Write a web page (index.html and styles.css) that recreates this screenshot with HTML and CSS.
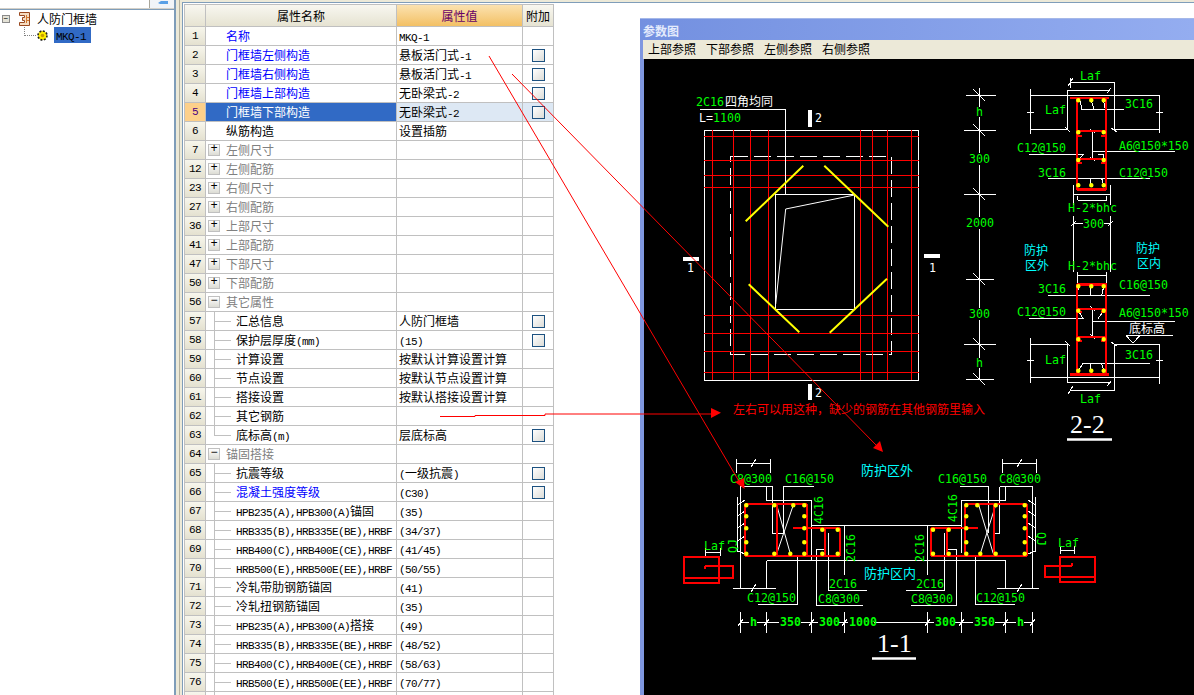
FILE: index.html
```html
<!DOCTYPE html>
<html lang="zh">
<head>
<meta charset="utf-8">
<title>人防门框墙</title>
<link rel="stylesheet" href="styles.css">
</head>
<body>
<div class="app">
  <aside class="side">
    <div class="side-top">
      <div class="side-box"></div>
      <div class="side-btn"><svg width="12" height="6" viewBox="0 0 12 6"><path class="btn-arrow" d="M1 3 4 1H11V4H3Z"/></svg></div>
    </div>
    <div class="tree">
      <div class="tree-row root">
        <span class="tree-toggle">−</span>
        <svg class="wall-icon" width="11" height="14" viewBox="0 0 11 14"><path class="wall-a" d="M.5.500H10.500V13.500H.5V10.500H5.500V8.500H3.500V5.500H5.500V3.500H.5Z"/><path class="wall-b" d="M7.500 3V11M7.500 5.500H10M7.500 8.500H10"/></svg>
        <span class="tree-label">人防门框墙</span>
      </div>
      <div class="tree-row leaf">
        <span class="tree-dots"></span>
        <svg class="gear" width="11" height="11" viewBox="0 0 11 11"><circle class="gear-a" cx="5.500" cy="5.500" r="4.500"/><circle class="gear-b" cx="5.500" cy="5.500" r="1.800"/></svg>
        <span class="tree-sel"><span class="la">MKQ-1</span></span>
      </div>
    </div>
  </aside>
  <div class="gap"></div>
  <main class="content">
    <table class="grid">
      <colgroup><col class="c1"><col class="c2"><col class="c3"><col class="c4"></colgroup>
      <thead><tr><th class="hd"></th><th class="hd">属性名称</th><th class="hd hv">属性值</th><th class="hd">附加</th></tr></thead>
      <tbody>
        <tr><td class="n">1</td><td class="name blue">名称</td><td class="val"><span class="la">MKQ-1</span></td><td></td></tr>
        <tr><td class="n">2</td><td class="name blue">门框墙左侧构造</td><td class="val">悬板活门式<span class="la">-1</span></td><td class="ck"><span class="box"></span></td></tr>
        <tr><td class="n">3</td><td class="name blue">门框墙右侧构造</td><td class="val">悬板活门式<span class="la">-1</span></td><td class="ck"><span class="box"></span></td></tr>
        <tr><td class="n">4</td><td class="name blue">门框墙上部构造</td><td class="val">无卧梁式<span class="la">-2</span></td><td class="ck"><span class="box"></span></td></tr>
        <tr><td class="n sel-n">5</td><td class="name sel-name">门框墙下部构造</td><td class="val sel-val">无卧梁式<span class="la">-2</span></td><td class="ck sel-val"><span class="box"></span></td></tr>
        <tr><td class="n">6</td><td class="name">纵筋构造</td><td class="val">设置插筋</td><td></td></tr>
        <tr><td class="n">7</td><td class="grp"><span class="exp">+</span>左侧尺寸</td><td></td><td></td></tr>
        <tr><td class="n">12</td><td class="grp"><span class="exp">+</span>左侧配筋</td><td></td><td></td></tr>
        <tr><td class="n">23</td><td class="grp"><span class="exp">+</span>右侧尺寸</td><td></td><td></td></tr>
        <tr><td class="n">27</td><td class="grp"><span class="exp">+</span>右侧配筋</td><td></td><td></td></tr>
        <tr><td class="n">36</td><td class="grp"><span class="exp">+</span>上部尺寸</td><td></td><td></td></tr>
        <tr><td class="n">41</td><td class="grp"><span class="exp">+</span>上部配筋</td><td></td><td></td></tr>
        <tr><td class="n">47</td><td class="grp"><span class="exp">+</span>下部尺寸</td><td></td><td></td></tr>
        <tr><td class="n">50</td><td class="grp"><span class="exp">+</span>下部配筋</td><td></td><td></td></tr>
        <tr><td class="n">56</td><td class="grp"><span class="exp">−</span>其它属性</td><td></td><td></td></tr>
        <tr><td class="n">57</td><td class="child">汇总信息</td><td class="val">人防门框墙</td><td class="ck"><span class="box"></span></td></tr>
        <tr><td class="n">58</td><td class="child">保护层厚度<span class="la">(mm)</span></td><td class="val"><span class="la">(15)</span></td><td class="ck"><span class="box"></span></td></tr>
        <tr><td class="n">59</td><td class="child">计算设置</td><td class="val">按默认计算设置计算</td><td></td></tr>
        <tr><td class="n">60</td><td class="child">节点设置</td><td class="val">按默认节点设置计算</td><td></td></tr>
        <tr><td class="n">61</td><td class="child">搭接设置</td><td class="val">按默认搭接设置计算</td><td></td></tr>
        <tr><td class="n">62</td><td class="child">其它钢筋</td><td class="val"></td><td></td></tr>
        <tr><td class="n">63</td><td class="child last">底标高<span class="la">(m)</span></td><td class="val">层底标高</td><td class="ck"><span class="box"></span></td></tr>
        <tr><td class="n">64</td><td class="grp"><span class="exp">−</span>锚固搭接</td><td></td><td></td></tr>
        <tr><td class="n">65</td><td class="child">抗震等级</td><td class="val"><span class="la">(</span>一级抗震<span class="la">)</span></td><td class="ck"><span class="box"></span></td></tr>
        <tr><td class="n">66</td><td class="child blue">混凝土强度等级</td><td class="val"><span class="la">(C30)</span></td><td class="ck"><span class="box"></span></td></tr>
        <tr><td class="n">67</td><td class="child"><span class="la">HPB235(A),HPB300(A)</span>锚固</td><td class="val"><span class="la">(35)</span></td><td></td></tr>
        <tr><td class="n">68</td><td class="child"><span class="la">HRB335(B),HRB335E(BE),HRBF</span></td><td class="val"><span class="la">(34/37)</span></td><td></td></tr>
        <tr><td class="n">69</td><td class="child"><span class="la">HRB400(C),HRB400E(CE),HRBF</span></td><td class="val"><span class="la">(41/45)</span></td><td></td></tr>
        <tr><td class="n">70</td><td class="child"><span class="la">HRB500(E),HRB500E(EE),HRBF</span></td><td class="val"><span class="la">(50/55)</span></td><td></td></tr>
        <tr><td class="n">71</td><td class="child">冷轧带肋钢筋锚固</td><td class="val"><span class="la">(41)</span></td><td></td></tr>
        <tr><td class="n">72</td><td class="child">冷轧扭钢筋锚固</td><td class="val"><span class="la">(35)</span></td><td></td></tr>
        <tr><td class="n">73</td><td class="child"><span class="la">HPB235(A),HPB300(A)</span>搭接</td><td class="val"><span class="la">(49)</span></td><td></td></tr>
        <tr><td class="n">74</td><td class="child"><span class="la">HRB335(B),HRB335E(BE),HRBF</span></td><td class="val"><span class="la">(48/52)</span></td><td></td></tr>
        <tr><td class="n">75</td><td class="child"><span class="la">HRB400(C),HRB400E(CE),HRBF</span></td><td class="val"><span class="la">(58/63)</span></td><td></td></tr>
        <tr><td class="n">76</td><td class="child"><span class="la">HRB500(E),HRB500E(EE),HRBF</span></td><td class="val"><span class="la">(70/77)</span></td><td></td></tr>
        <tr><td class="n"></td><td class="child"></td><td></td><td></td></tr>
      </tbody>
    </table>
  </main>
</div>

<section class="win">
  <header class="win-title">参数图</header>
  <nav class="win-menu"><span>上部参照</span><span>下部参照</span><span>左侧参照</span><span>右侧参照</span></nav>
  <svg class="cad" width="550" height="636" viewBox="644 59 550 636">
    <!-- plan -->
    <rect class="w" x="704.500" y="130.500" width="214" height="250"/>
    <path class="w dash" d="M730.500 156.500H891.500V354.500H730.500Z"/>
    <path class="r1" d="M712.500 130V380M733.500 130V380M750.500 130V380M768.500 130V380M860.500 130V380M872.500 130V380M887.500 130V380M911.500 130V380M704 136.500H919M704 160.500H919M704 175.500H919M704 187.500H919M704 315.500H919M704 333.500H919M704 351.500H919M704 372.500H919"/>
    <rect class="w" x="775.500" y="194.500" width="79" height="115"/>
    <path class="wa" d="M854.500 195 785.700 209 775.700 304"/>
    <path class="w" d="M700 109.500H785.500V194"/>
    <path class="ye" d="M803.300 165.700 745.700 221.300M824.300 165.700 888.300 226.700M748.700 284.300 799.300 332.300M887 278.700 829.700 332.700"/>
    <path class="bar" d="M810 110V127M810 384V400M683 259H699M924 256H940"/>
    <text class="t wt" x="815" y="122">2</text><text class="t wt" x="815" y="397">2</text>
    <text class="t wt" x="687" y="272">1</text><text class="t wt" x="929" y="272">1</text>
    <text class="t gt" x="696" y="106">2C16</text><text class="cj wt" x="725" y="106">四角均同</text>
    <text class="t wt" x="699" y="122">L=</text><text class="t gt" x="713" y="122">1100</text>

    <!-- height dimensions -->
    <path class="w" d="M979.500 88V107M979.500 117V153M979.500 165V217M979.500 229V308M979.500 320V358M979.500 368V380M966 95.500H996M964 130.500H996M964 194.500H996M966 279.500H994M964 344.500H996M966 379.500H994M973 89 985 101M973 124 985 136M973 188 985 200M973 273 985 285M973 338 985 350M973 373 985 385"/>
    <text class="t gt" x="976" y="116">h</text><text class="t gt" x="969" y="163">300</text><text class="t gt" x="966" y="227">2000</text>
    <text class="t gt" x="969" y="318">300</text><text class="t gt" x="976" y="367">h</text>

    <!-- section 2-2 upper -->
    <path class="w" d="M1030.500 89V134M1159.500 95V133M1030.500 95.500H1159.500M1030.500 129.500H1067.500V90H1110M1114.500 129.500H1159.500M1114.500 129.500V82.500H1070.500M1070.500 78V88M1027 112H1034M1156 112H1163M1065 127 1070 132M1111 128 1117 132M1068 86 1073 78M1107 93 1111 88"/>
    <path class="w" d="M1124 109.500H1082L1080 101M1094 109.500 1091.500 101M1105.500 109.500 1103.500 101M1029 154.500H1083L1078.500 160M1092.500 131.700V160M1092.500 151.500H1175M1090 129 1095 133M1090 157 1095 161M1098 154.500H1103.700V160M1048 178.500H1150M1077.500 178.500 1078.300 185M1090 178.500 1091.300 185M1101.700 178.500 1103.700 185M1073.500 194.500H1110.500M1073.500 185V205M1110.500 185V205M1077.500 200.500H1106.500M1077.500 196V200M1106.500 196V200M1073.500 216V272M1110.500 216V272M1073.500 223.500H1083M1103.500 223.500H1110.500M1071 226 1076 221M1108 226 1113 221"/>
    <path class="r2" d="M1070 97.700H1108.700M1077 98V190M1105.700 98V190M1077 130.700H1105.700M1077 158.700H1105.700M1077 135.500H1082M1101 135.500H1105.700M1077 163H1082M1101 163H1105.700"/>
    <path class="r3" d="M1077 189.300H1106"/>
    <path class="dots" d="M1078.300 100.300h0M1091.300 100.300h0M1103.700 100.300h0M1078.300 132.300h0M1103.700 132.300h0M1078.300 160h0M1103.700 160h0M1078.300 185.300h0M1091.300 185.300h0M1103.700 185.300h0"/>
    <text class="t gt" x="1080" y="80">Laf</text><text class="t gt" x="1045" y="114">Laf</text><text class="t gt" x="1125" y="108">3C16</text>
    <text class="t gt" x="1017" y="152">C12@150</text><text class="t gt" x="1119" y="150">A6@150*150</text>
    <text class="t gt" x="1038" y="177">3C16</text><text class="t gt" x="1119" y="177">C12@150</text>
    <text class="t gt" x="1068" y="212">H-2*bhc</text><text class="t gt" x="1083" y="228">300</text>

    <text class="cy" x="1024" y="255">防护</text><text class="cy" x="1025" y="270">区外</text>
    <text class="cy" x="1136" y="253">防护</text><text class="cy" x="1137" y="268">区内</text>

    <!-- section 2-2 lower -->
    <path class="w" d="M1077 275.500H1106.500M1077 272V284M1106.500 272V284M1048 295.500H1150M1078.300 286.300 1077.500 295.500M1090 295.500 1091.300 286.300M1101.700 295.500 1103.700 286.300M1029 318.500H1083L1078.500 311M1092.500 308V337M1092.500 321.500H1175M1090 306 1095 311M1090 334 1095 339M1098 318.500 1103.700 310.700M1126 335.500H1172.500M1126 335.500 1133 343 1140 335.500M1030.500 344.500H1067.500V382.500H1111M1114.500 344.500H1159.500M1114.500 344.500V390.500H1070.500M1030.500 338V383M1159.500 344V384M1030.500 377.500H1159.500M1027 360H1034M1156 360H1163M1065 341 1070 346M1111 342 1117 346M1068 394 1073 386M1107 386 1111 381M1150 363.500H1083L1078.300 370.700M1090 363.500 1091.300 370.700M1101.700 363.500 1103.700 370.700"/>
    <path class="r2" d="M1077 284V373M1105.700 284V373M1077 308.700H1105.700M1077 336.700H1105.700M1077 311.500H1082M1101 311.500H1105.700M1077 341H1082M1101 341H1105.700"/>
    <path class="r3" d="M1077 284.500H1106.700M1070 374.700H1108.700"/>
    <path class="dots" d="M1078.300 286.300h0M1091.300 286.300h0M1103.700 286.300h0M1078.300 310.700h0M1103.700 310.700h0M1078.300 339.300h0M1103.700 339.300h0M1078.300 370.700h0M1091.300 370.700h0M1103.700 370.700h0"/>
    <text class="t gt" x="1068" y="270">H-2*bhc</text><text class="t gt" x="1038" y="293">3C16</text><text class="t gt" x="1119" y="289">C16@150</text>
    <text class="t gt" x="1017" y="316">C12@150</text><text class="t gt" x="1119" y="317">A6@150*150</text>
    <text class="cj wt" x="1129" y="333">底标高</text>
    <text class="t gt" x="1045" y="364">Laf</text><text class="t gt" x="1125" y="359">3C16</text><text class="t gt" x="1080" y="403">Laf</text>
    <text class="big" x="1070" y="433">2-2</text><path class="ul" d="M1067 439.500H1112"/>

    <text class="cj rt" x="733" y="414">左右可以用这种，缺少的钢筋在其他钢筋里输入</text>

    <!-- section 1-1 left -->
    <path class="w" d="M736 463.500H770M736.500 459V473M770.500 459V473M751 467 756 459M733 588.500H775.500M751 592 756 584M740.500 486V588M740.500 486.500H772.500V533.500H783.500V486.500H814M766.500 486.500V500.500H811.500M766.500 560.500H1005.500M766.500 560.500V588M1005.500 560.500V588M811.500 500V560M811.500 525.500H961.500M844.500 525V575M927.500 525V575M996.500 588.500H1038.500M1032.500 486V588M1017 467 1022 459M1017 592 1022 584M1002.500 463.500H1036.500M1002.500 459V473M1036.500 459V473M959.500 486.500H988.500V533M999.500 486.500H1032.500M999.500 486.500V533.500H994M1005.500 486.500V500.500H961.500M961.500 500V553"/>
    <path class="w" d="M737.500 497V551M737.500 505 745 500M737.500 516 745 511M737.500 528 745 523M737.500 541 745 536M737.500 551 745 554M1035.500 497V551M1035.500 505 1028 500M1035.500 516 1028 511M1035.500 528 1028 523M1035.500 541 1028 536M1035.500 551 1028 554"/>
    <path class="w" d="M797.500 556V604.500H758M828.500 533V590.500H866.500M816.500 605.500V549.500H825M816.500 605.500H862.500M944.500 533V590.500H906M956.500 549.500V605.500H910.500M956.500 549.500H947M705 552.500H720M705 548V556M720 548V556M1060 550.500H1074M1060 546V554M1074 546V554M975.500 556V604.500H1015"/>
    <path class="wa" d="M776.700 505 790.300 553.700M793.300 505 776.700 553.700M978.700 505 993.300 553.700M995.700 505 980.300 553.700"/>
    <path class="r2" d="M745 504H807.300M745 504V556M807.300 504V556M745 556H840.300M776.700 505V556M793.300 528H840.300M825 528V556M840.300 528V556M965 504H1027M965 504V556M1027 504V556M930.700 556H1027M994.300 505V556M930.700 528H978.300M930.700 528V556M947 528V556"/>
    <path class="dots" d="M746.300 505.300h0M774.300 505.300h0M793.300 505.300h0M804.300 505.300h0M746.300 516.300h0M804.300 516.300h0M746.300 528.300h0M804.300 528.300h0M746.300 542.300h0M804.300 542.300h0M746.300 553.700h0M774.300 553.700h0M790.300 553.700h0M804.300 553.700h0M822.300 529.700h0M837.700 529.700h0M822.300 553.700h0M837.700 553.700h0M966.300 505.300h0M977.300 505.300h0M995.700 505.300h0M1024.700 505.300h0M966.300 516.300h0M1024.700 516.300h0M966.300 528.300h0M1024.700 528.300h0M966.300 542.300h0M1024.700 542.300h0M966.300 553.700h0M980.300 553.700h0M995.700 553.700h0M1024.700 553.700h0M933 529.700h0M948.700 529.700h0M933 553.700h0M948.700 553.700h0"/>
    <path class="r2" d="M684 557H719.300V582.700H684ZM705 566H733.300V578H685M705 566V569M1060 556.500H1095V582H1060ZM1071.700 566H1045V576.700H1095M1071.700 566V563"/>

    <text class="t gt" x="730" y="483">C8@300</text><text class="t gt" x="785" y="483">C16@150</text>
    <text class="t gt" x="938" y="483">C16@150</text><text class="t gt" x="999" y="483">C8@300</text>
    <text class="cy13" x="861" y="475">防护区外</text><text class="cy13" x="864" y="578">防护区内</text>
    <text class="t gt" transform="rotate(-90 823 510)" x="809" y="510">4C16</text>
    <text class="t gt" transform="rotate(-90 957 508)" x="943" y="508">4C16</text>
    <text class="t gt" transform="rotate(-90 855 548)" x="841" y="548">2C16</text>
    <text class="t gt" transform="rotate(-90 924 548)" x="910" y="548">2C16</text>
    <text class="t gt" transform="rotate(-90 737 546)" x="730" y="546">QJ</text>
    <text class="t gt" transform="rotate(90 1037 532)" x="1037" y="532">QJ</text>
    <text class="t gt" x="704" y="550">Laf</text><text class="t gt" x="1058" y="547">Laf</text>
    <text class="t gt" x="747" y="602">C12@150</text><text class="t gt" x="976" y="602">C12@150</text>
    <text class="t gt" x="829" y="588">2C16</text><text class="t gt" x="916" y="588">2C16</text>
    <text class="t gt" x="818" y="603">C8@300</text><text class="t gt" x="911" y="603">C8@300</text>

    <path class="w" d="M740.500 612V633M766.500 612V633M811.500 612V633M844.500 612V633M927.500 612V633M961.500 612V633M1005.500 612V633M1032.500 612V633M740.500 622.500H749M757 622.500H779M801 622.500H818M838 622.500H848M874 622.500H934M955 622.500H973M995 622.500H1016M1024 622.500H1032.500M738 626 743 619M764 626 769 619M809 626 814 619M842 626 847 619M925 626 930 619M959 626 964 619M1003 626 1008 619M1030 626 1035 619"/>
    <text class="t gb" x="750" y="626">h</text><text class="t gb" x="780" y="626">350</text><text class="t gb" x="819" y="626">300</text><text class="t gb" x="849" y="626">1000</text>
    <text class="t gb" x="935" y="626">300</text><text class="t gb" x="974" y="626">350</text><text class="t gb" x="1017" y="626">h</text>
    <text class="big" x="877" y="652">1-1</text><path class="ul" d="M872 658.500H916"/>
  </svg>
</section>

<svg class="notes" width="1194" height="695" viewBox="0 0 1194 695">
  <path class="nl" d="M489 56 740 483M512 74 877 446M440 416.500H475V415.500H545V414H715"/>
  <path class="nh" d="M744.500 489 735 482 744 478ZM883 452 873 448 880 441ZM721 412.700 711 408V418Z"/>
</svg>
</body>
</html>
```
FILE: styles.css
```css
* { box-sizing: border-box; }
html, body { margin: 0; height: 100%; overflow: hidden; }
body {
  position: relative;
  background: #ece9d8;
  font: 12px/16px "Noto Sans CJK SC", "Liberation Sans", sans-serif;
  color: #000;
}
.la {
  font-family: "Liberation Mono", monospace;
  font-size: 11px;
  line-height: 10px;
  letter-spacing: -0.6px;
}
.app { display: flex; height: 695px; }

/* left tree */
.side {
  width: 176px;
  flex: none;
  display: flex;
  flex-direction: column;
  background: #fff;
  border-right: 2px solid #7f9db9;
}
.side-top {
  display: flex;
  height: 10px;
  flex: none;
  background: #d4d0c8;
  border-bottom: 1px solid #7f9db9;
}
.side-box { width: 150px; height: 8px; background: #fff; border-right: 1px solid #a9a69a; }
.side-btn { flex: 1; height: 8px; background: #f1f4f8; padding-left: 7px; }
.side-btn svg { display: block; }
.btn-arrow { fill: #5aa0e6; }
.tree-row { display: flex; align-items: center; }
.root { height: 17px; padding-left: 2px; }
.tree-toggle {
  width: 8px; height: 8px;
  border: 1px solid #8a8a8a;
  background: #e4e2d6;
  font: 8px/6px "Liberation Mono", monospace;
  text-align: center;
  margin-right: 9px;
}
.wall-icon { margin-right: 7px; }
.wall-a { fill: #f6dcc0; stroke: #9a4a20; stroke-width: 1; }
.wall-b { fill: none; stroke: #d47a30; stroke-width: 1; }
.leaf { height: 16px; padding-left: 24px; }
.tree-dots {
  width: 12px; height: 9px;
  border-left: 1px dotted #808080;
  border-bottom: 1px dotted #808080;
  align-self: flex-start;
}
.gear { margin: 0 6px 0 1px; }
.gear-a { fill: #ffee00; stroke: #222; stroke-width: 1.6; stroke-dasharray: 2 1.500; }
.gear-b { fill: #c8a000; }
.tree-sel { background: #316ac5; width: 37px; height: 16px; line-height: 16px; padding-left: 2px; }

.gap { width: 4px; flex: none; border-right: 1px solid #b5b2a0; }

/* grid */
.content {
  flex: 1;
  margin: 2px 0 0 2px;
  padding: 1px 0 0 1px;
  background: #fff;
  border-left: 1px solid #7f9db9;
  border-top: 1px solid #7f9db9;
  overflow: hidden;
}
.grid {
  table-layout: fixed;
  width: 370px;
  border-collapse: separate;
  border-spacing: 0;
  background: #fff;
}
.c1 { width: 22px; }
.c2 { width: 191px; }
.c3 { width: 126px; }
.c4 { width: 31px; }
.grid th, .grid td {
  padding: 0;
  height: 19px;
  border-right: 1px solid #c0c0c0;
  border-bottom: 1px solid #c0c0c0;
  font-weight: normal;
  line-height: 16px;
  white-space: nowrap;
  overflow: hidden;
}
.grid th:first-child, .grid td:first-child { border-left: 1px solid #c0c0c0; }
.grid .hd {
  height: 23px;
  border-top: 1px solid #c0c0c0;
  background: linear-gradient(#f8f7f0, #e6e3d2);
  text-align: center;
}
.grid .hv { background: linear-gradient(#fbe2b0, #f3c064); color: #660066; }
.grid .n {
  text-align: center;
  background: linear-gradient(#f7f6ec, #e4e1d0);
  font: 11px/16px "Liberation Mono", monospace;
  letter-spacing: -0.6px;
}
.grid .sel-n { background: #fdd08a; color: #4b0082; }
.grid .name { padding-left: 20px; }
.grid .blue { color: #0000ff; }
.grid .sel-name { background: #316ac5; color: #fff; }
.grid .sel-val { background: #dde8f4; }
.grid .val { padding-left: 2px; }
.grid .grp { padding-left: 2px; color: #808080; }
.exp {
  display: inline-block;
  width: 12px; height: 12px;
  margin-right: 6px;
  border: 1px solid #c0c0c0;
  background: linear-gradient(#fff, #dcdcd4);
  color: #000;
  font: 12px/9px "Liberation Mono", monospace;
  text-align: center;
  vertical-align: top;
  margin-top: 2px;
}
.grid .child {
  padding-left: 30px;
  background:
    linear-gradient(#c0c0c0, #c0c0c0) 8px 0 / 1px 100% no-repeat,
    linear-gradient(#c0c0c0, #c0c0c0) 9px 9px / 16px 1px no-repeat;
}
.grid .child.blue { color: #0000ff; }
.grid .last {
  background:
    linear-gradient(#c0c0c0, #c0c0c0) 8px 0 / 1px 10px no-repeat,
    linear-gradient(#c0c0c0, #c0c0c0) 9px 9px / 16px 1px no-repeat;
}
.grid .ck { text-align: center; }
.box {
  display: block;
  width: 13px; height: 13px;
  margin: 0 0 0 9px;
  border: 1px solid #1c5180;
  background: linear-gradient(135deg, #fff, #dcdcd7);
}

/* floating window */
.win {
  position: absolute;
  left: 640px; top: 18px;
  width: 554px; height: 677px;
  display: flex;
  flex-direction: column;
  background: #7f97e0;
  padding-left: 3px;
}
.win-title {
  height: 22px;
  flex: none;
  margin-left: -3px;
  padding: 2px 0 0 3px;
  background: linear-gradient(90deg, #7390e0, #94adf0);
  border-top: 1px solid #a5b8e8;
  color: #e4ebfc;
  font-weight: 700;
  line-height: 19px;
}
.win-menu {
  height: 19px;
  flex: none;
  display: flex;
  gap: 10px;
  padding-left: 5px;
  background: #ece9d8;
  line-height: 18px;
}
.cad {
  display: block;
  flex: none;
  background: #000;
  margin-left: 1px;
}
.cad path, .cad rect { fill: none; }
.w { stroke: #fff; stroke-width: 1; shape-rendering: crispEdges; }
.wa { stroke: #fff; stroke-width: 1; }
.dash { stroke-dasharray: 17 6; }
.r1 { stroke: #ff0000; stroke-width: 1; shape-rendering: crispEdges; }
.r2 { stroke: #ff0000; stroke-width: 2; shape-rendering: crispEdges; }
.r3 { stroke: #ff0000; stroke-width: 3; shape-rendering: crispEdges; }
.ye { stroke: #ffff00; stroke-width: 2; }
.bar { stroke: #fff; stroke-width: 4; shape-rendering: crispEdges; }
.dots { stroke: #ffff00; stroke-width: 4.500; stroke-linecap: round; }
.ul { stroke: #fff; stroke-width: 2.500; }
.t { font: 11.600px "DejaVu Sans Mono", monospace; }
.cj { font: 12px "Noto Sans CJK SC", sans-serif; }
.cy { font: 12px "Noto Sans CJK SC", sans-serif; fill: #00ffff; }
.cy13 { font: 13px "Noto Sans CJK SC", sans-serif; fill: #00ffff; }
.wt { fill: #fff; }
.gt { fill: #00ff00; }
.gb { fill: #00ff00; font-weight: 700; }
.rt { fill: #ff0000; }
.big { font: 26px "Liberation Serif", serif; fill: #fff; }

/* hand-drawn notes over everything */
.notes { position: absolute; left: 0; top: 0; pointer-events: none; }
.nl { fill: none; stroke: #ff0000; stroke-width: 1; }
.nh { fill: #ff0000; }
```
